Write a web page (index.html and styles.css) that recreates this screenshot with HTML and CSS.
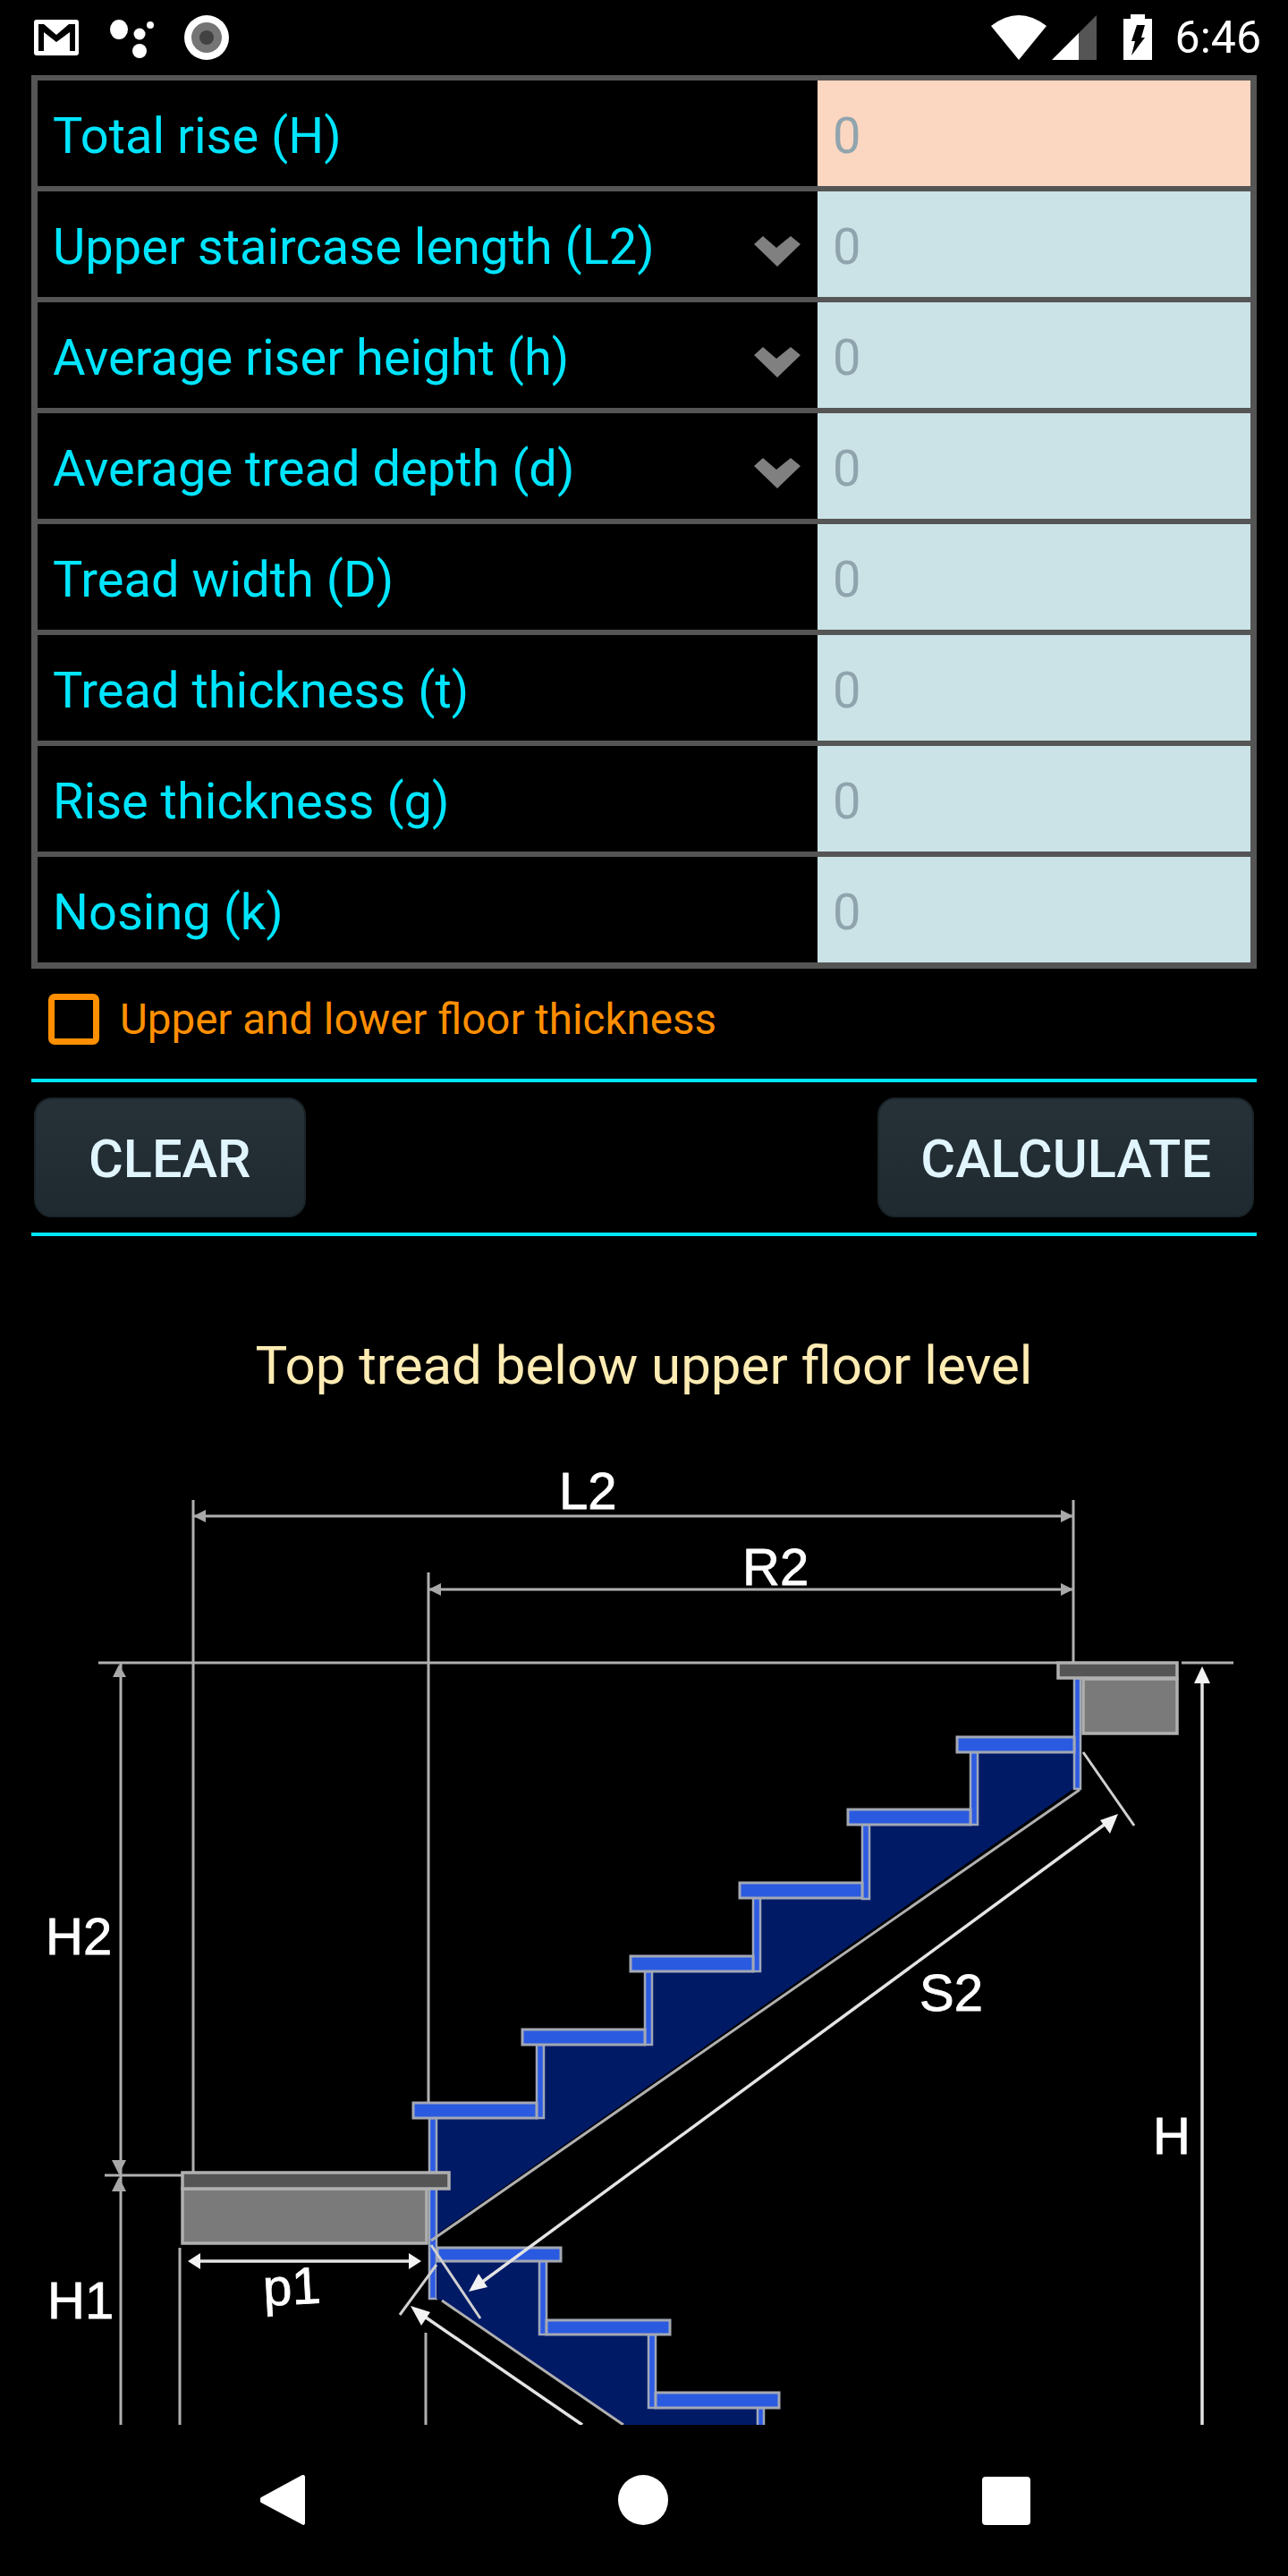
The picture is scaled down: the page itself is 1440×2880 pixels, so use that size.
FILE: index.html
```html
<!doctype html>
<html lang="en">
<head>
  <title>Stairs calculator</title>
  <meta charset="utf-8">
  <meta name="viewport" content="width=device-width, initial-scale=1">
  <link rel="stylesheet" href="styles.css">
</head>
<body>

  <!-- status bar -->
  <div class="status">
    <div class="status-left">
      <svg class="ico-mail" viewBox="38 16 50 52"><rect x="38" y="22" width="50" height="40" rx="3" fill="#fff"/><path d="M43 27h6l14 12 14-12h7v30h-6V36L63 47 49 36v21h-6z" fill="#000"/></svg>
      <svg class="ico-dots" viewBox="122 16 52 52"><ellipse cx="133" cy="33" rx="10" ry="11" fill="#fff"/><circle cx="156" cy="38" r="6.500" fill="#fff"/><circle cx="168" cy="28" r="4" fill="#fff"/><circle cx="156" cy="57" r="8" fill="#fff"/></svg>
      <svg class="ico-rec" viewBox="206 16 52 52"><circle cx="231" cy="42" r="25" fill="#fff"/><circle cx="231" cy="42" r="17" fill="#757575"/><circle cx="231" cy="42" r="8" fill="#424242"/></svg>
    </div>
    <div class="status-right">
      <svg class="ico-wifi" viewBox="1109 16 62 52"><path d="M1140 67l-31-38q31-24 62 0z" fill="#fff"/></svg>
      <svg class="ico-signal" viewBox="1177 16 50 52"><path d="M1177 67l30-30v30z" fill="#fff"/><path d="M1207 37l20-20v50h-20z" fill="#555"/></svg>
      <svg class="ico-batt" viewBox="1257 16 32 52"><path d="M1265 16h16v5h8v46h-32V21h8z" fill="#fff"/><path d="M1272 28h9l-4 14h4l-15 20 4-16h-4z" fill="#000"/></svg>
      <span class="clock">6:46</span>
    </div>
  </div>

  <div class="main">
    <!-- inputs -->
    <div class="table">
      <div class="row">
        <label class="name">Total rise (H)</label>
        <input class="val val-main" type="text" placeholder="0">
      </div>
      <div class="row">
        <label class="name">Upper staircase length (L2)</label>
        <svg class="chev" viewBox="0 0 52 34"><path d="M0 9L10 0l15 13L41 0l11 9-26 25z"/></svg>
        <input class="val" type="text" placeholder="0">
      </div>
      <div class="row">
        <label class="name">Average riser height (h)</label>
        <svg class="chev" viewBox="0 0 52 34"><path d="M0 9L10 0l15 13L41 0l11 9-26 25z"/></svg>
        <input class="val" type="text" placeholder="0">
      </div>
      <div class="row">
        <label class="name">Average tread depth (d)</label>
        <svg class="chev" viewBox="0 0 52 34"><path d="M0 9L10 0l15 13L41 0l11 9-26 25z"/></svg>
        <input class="val" type="text" placeholder="0">
      </div>
      <div class="row">
        <label class="name">Tread width (D)</label>
        <input class="val" type="text" placeholder="0">
      </div>
      <div class="row">
        <label class="name">Tread thickness (t)</label>
        <input class="val" type="text" placeholder="0">
      </div>
      <div class="row">
        <label class="name">Rise thickness (g)</label>
        <input class="val" type="text" placeholder="0">
      </div>
      <div class="row">
        <label class="name">Nosing (k)</label>
        <input class="val" type="text" placeholder="0">
      </div>
    </div>

    <label class="floor">
      <input class="check" type="checkbox">
      <span>Upper and lower floor thickness</span>
    </label>

    <div class="actions">
      <button class="butt butt-clear">CLEAR</button>
      <button class="butt">CALCULATE</button>
    </div>

    <h2 class="title">Top tread below upper floor level</h2>
  </div>

  <!-- stair drawing, coordinates are page pixels -->
  <svg class="drawing" viewBox="0 1620 1440 1091">
    <!-- upper flight -->
    <path class="navy" d="M1200 1959v41l-712 498v-130h120v-82h121v-82h122v-82h121v-82h121v-81z"/>
    <rect class="riser" x="1201" y="1876" width="7" height="124"/>
    <rect class="riser" x="1085" y="1959" width="8" height="81"/>
    <rect class="riser" x="964" y="2040" width="8" height="83"/>
    <rect class="riser" x="842" y="2122" width="8" height="82"/>
    <rect class="riser" x="721" y="2204" width="8" height="82"/>
    <rect class="riser" x="600" y="2286" width="8" height="82"/>
    <rect class="riser" x="480" y="2368" width="8" height="202"/>
    <rect class="tread" x="1070" y="1942" width="131" height="17"/>
    <rect class="tread" x="948" y="2023" width="137" height="17"/>
    <rect class="tread" x="827" y="2105" width="137" height="17"/>
    <rect class="tread" x="705" y="2187" width="137" height="17"/>
    <rect class="tread" x="584" y="2269" width="137" height="17"/>
    <rect class="tread" x="462" y="2351" width="138" height="17"/>
    <line class="dim" x1="1207" y1="2001" x2="482" y2="2505"/>

    <!-- lower flight -->
    <path class="navy" d="M488 2528h115v82h122v82h122v19H697l-203-139-6-2z"/>
    <rect class="riser" x="603" y="2528" width="8" height="82"/>
    <rect class="riser" x="725" y="2610" width="8" height="82"/>
    <rect class="riser" x="847" y="2692" width="7" height="25"/>
    <rect class="tread" x="489" y="2513" width="138" height="15"/>
    <rect class="tread" x="611" y="2594" width="138" height="16"/>
    <rect class="tread" x="733" y="2675" width="138" height="17"/>
    <line class="dim" x1="494" y1="2572" x2="697" y2="2711"/>

    <!-- floors -->
    <rect class="slab" x="1183" y="1859" width="133" height="17"/>
    <rect class="block" x="1211" y="1877" width="105" height="61"/>
    <rect class="block" x="204" y="2447" width="273" height="61"/>
    <rect class="slab" x="204" y="2429" width="298" height="18"/>

    <!-- dimension lines -->
    <line class="dim" x1="216" y1="1677" x2="216" y2="2428"/>
    <line class="dim" x1="479" y1="1758" x2="479" y2="2350"/>
    <line class="dim" x1="1200" y1="1677" x2="1200" y2="1859"/>
    <line class="dim" x1="216" y1="1695" x2="1200" y2="1695"/>
    <line class="dim" x1="479" y1="1777" x2="1200" y2="1777"/>
    <line class="dim" x1="110" y1="1859" x2="1182" y2="1859"/>
    <line class="dim" x1="1321" y1="1859" x2="1379" y2="1859"/>
    <line class="dim" x1="135" y1="1859" x2="135" y2="2711"/>
    <line class="dim" x1="117" y1="2432" x2="203" y2="2432"/>
    <line class="dim" x1="201" y1="2513" x2="201" y2="2711"/>
    <line class="dim" x1="476" y1="2608" x2="476" y2="2711"/>
    <path class="arrow" d="M216 1695l14-7v14zM479 1777l14-7v14zM1200 1695l-14-7v14zM1200 1777l-14-7v14zM133 1861l-7 14h15zM133 2431l-8-16h16zM133 2434l-8 16h16z"/>

    <line class="bright" x1="1344" y1="1870" x2="1344" y2="2711"/>
    <path class="arrow-w" d="M1344 1863l9 19h-18z"/>
    <line class="bright" x1="1240" y1="2036" x2="534" y2="2555"/>
    <path class="arrow-w" d="M1250 2028l-9 22-11-15zM524 2562l11-20 10 15z"/>
    <line class="bright" x1="214" y1="2528" x2="468" y2="2528"/>
    <path class="arrow-w" d="M210 2528l14-9v18zM471 2528l-14-9v18z"/>
    <line class="bright" x1="466" y1="2584" x2="651" y2="2711"/>
    <path class="arrow-w" d="M459 2578l22 7-10 15z"/>
    <line class="tick" x1="1211" y1="1959" x2="1268" y2="2041"/>
    <line class="tick" x1="482" y1="2510" x2="537" y2="2592"/>
    <line class="tick" x1="447" y1="2588" x2="488" y2="2532"/>

    <text class="lbl" x="625" y="1687">L2</text>
    <text class="lbl" x="830" y="1772">R2</text>
    <text class="lbl" x="51" y="2185">H2</text>
    <text class="lbl" x="1028" y="2248">S2</text>
    <text class="lbl" x="1289" y="2408">H</text>
    <text class="lbl" x="53" y="2592">H1</text>
    <text class="lbl" x="295" y="2578" transform="rotate(-3 295 2578)">p1</text>
  </svg>

  <!-- nav bar -->
  <div class="nav">
    <svg class="nav-ico" viewBox="0 0 50 56"><path d="M48 0a2 2 0 0 1 2 2v52a2 2 0 0 1-3 1.600L1 31a4 4 0 0 1 0-6L47 0z" fill="#fff"/></svg>
    <svg class="nav-ico" viewBox="0 0 56 56"><circle cx="28" cy="28" r="28" fill="#fff"/></svg>
    <svg class="nav-ico" viewBox="0 0 54 54"><rect width="54" height="54" rx="4" fill="#fff"/></svg>
  </div>

</body>
</html>
```

FILE: styles.css
```css
body {
  background-color: black;
  font-family: Roboto, "Liberation Sans", sans-serif;
  margin: 0px;
  padding: 0px;
  width: 1440px;
}

/* status bar */
.status {
  display: flex;
  justify-content: space-between;
  align-items: center;
  height: 84px;
  padding: 0 30px 0 38px;
}
.status-left, .status-right {
  display: flex;
  align-items: center;
}
.status svg {
  display: block;
  height: 52px;
}
.ico-mail { width: 50px; }
.ico-dots { width: 52px; margin-left: 34px; }
.ico-rec { width: 52px; margin-left: 32px; }
.ico-wifi { width: 62px; }
.ico-signal { width: 50px; margin-left: 6px; }
.ico-batt { width: 32px; margin-left: 30px; }
.clock {
  color: white;
  font-size: 50px;
  line-height: 52px;
  margin-left: 26px;
}

.main {
  margin: 0 35px;
}

/* inputs */
.table {
  display: grid;
  gap: 6px;
  padding: 0 7px 7px 7px;
  border-top: 6px solid #555;
  background-color: #555;
}
.row {
  display: flex;
  align-items: center;
  height: 118px;
  background-color: black;
}
.name {
  flex: 1;
  padding: 5px 0 0 17px;
  color: #00e5ff;
  font-size: 56px;
}
.chev {
  width: 52px;
  height: 34px;
  margin: 16px 19px 0 0;
  fill: #808080;
}
.val {
  box-sizing: border-box;
  width: 484px;
  height: 118px;
  padding: 5px 0 0 17px;
  border: none;
  border-radius: 0;
  background-color: #cbe3e6;
  font: 56px Roboto, sans-serif;
}
.val-main {
  background-color: #fbd6c1;
}
.val::placeholder {
  color: #90a4ae;
  opacity: 1;
}

/* checkbox row */
.floor {
  display: flex;
  align-items: center;
  gap: 23px;
  height: 123px;
  padding: 0 0 10px 19px;
  box-sizing: border-box;
  color: #ff8f00;
  font-size: 47.500px;
}
.check {
  appearance: none;
  box-sizing: border-box;
  width: 57px;
  height: 57px;
  margin: 0;
  border: 7px solid #ff8f00;
  border-radius: 7px;
}

/* buttons */
.actions {
  display: flex;
  justify-content: space-between;
  padding: 17px 3px 17px 3px;
  border-top: 4px solid #00e5ff;
  border-bottom: 4px solid #00e5ff;
}
.butt {
  height: 134px;
  padding: 4px 46px 0 46px;
  border: 2px solid #1a2428;
  border-radius: 20px;
  background: linear-gradient(#263238, #1f2a30);
  color: #e1f5fe;
  font: 500 59.500px Roboto, sans-serif;
}
.butt-clear {
  padding: 4px 59px 0 59px;
}

.title {
  height: 126px;
  margin: 0;
  padding-top: 112px;
  color: #ffecb3;
  font-size: 60px;
  font-weight: 400;
  line-height: 66px;
  text-align: center;
}

/* drawing */
.drawing {
  display: block;
  width: 1440px;
  height: 1091px;
  filter: blur(0.6px);
}
.navy { fill: #001a66; }
.riser {
  fill: #2d5be3;
  stroke: #9fa8b8;
  stroke-width: 2.500;
}
.tread {
  fill: #2a5ae0;
  stroke: #a3a8b3;
  stroke-width: 3;
}
.slab {
  fill: #555;
  stroke: #b0b0b0;
  stroke-width: 3.500;
}
.block {
  fill: #7a7a7a;
  stroke: #b0b0b0;
  stroke-width: 3.500;
}
.dim {
  stroke: #b0b0b0;
  stroke-width: 3;
}
.arrow { fill: #a8a8a8; }
.bright {
  stroke: #e4e4e4;
  stroke-width: 3.500;
}
.arrow-w { fill: #f2f2f2; }
.tick {
  stroke: #d0d0d0;
  stroke-width: 3;
}
.lbl {
  fill: white;
  stroke: white;
  stroke-width: 0.800;
  font-family: "Liberation Sans", sans-serif;
  font-size: 58px;
}

/* nav bar */
.nav {
  position: relative;
  height: 169px;
}
.nav-ico {
  position: absolute;
  display: block;
}
.nav-ico:nth-child(1) { left: 291px; top: 56px; width: 50px; height: 56px; }
.nav-ico:nth-child(2) { left: 691px; top: 56px; width: 56px; height: 56px; }
.nav-ico:nth-child(3) { left: 1098px; top: 58px; width: 54px; height: 54px; }
```
